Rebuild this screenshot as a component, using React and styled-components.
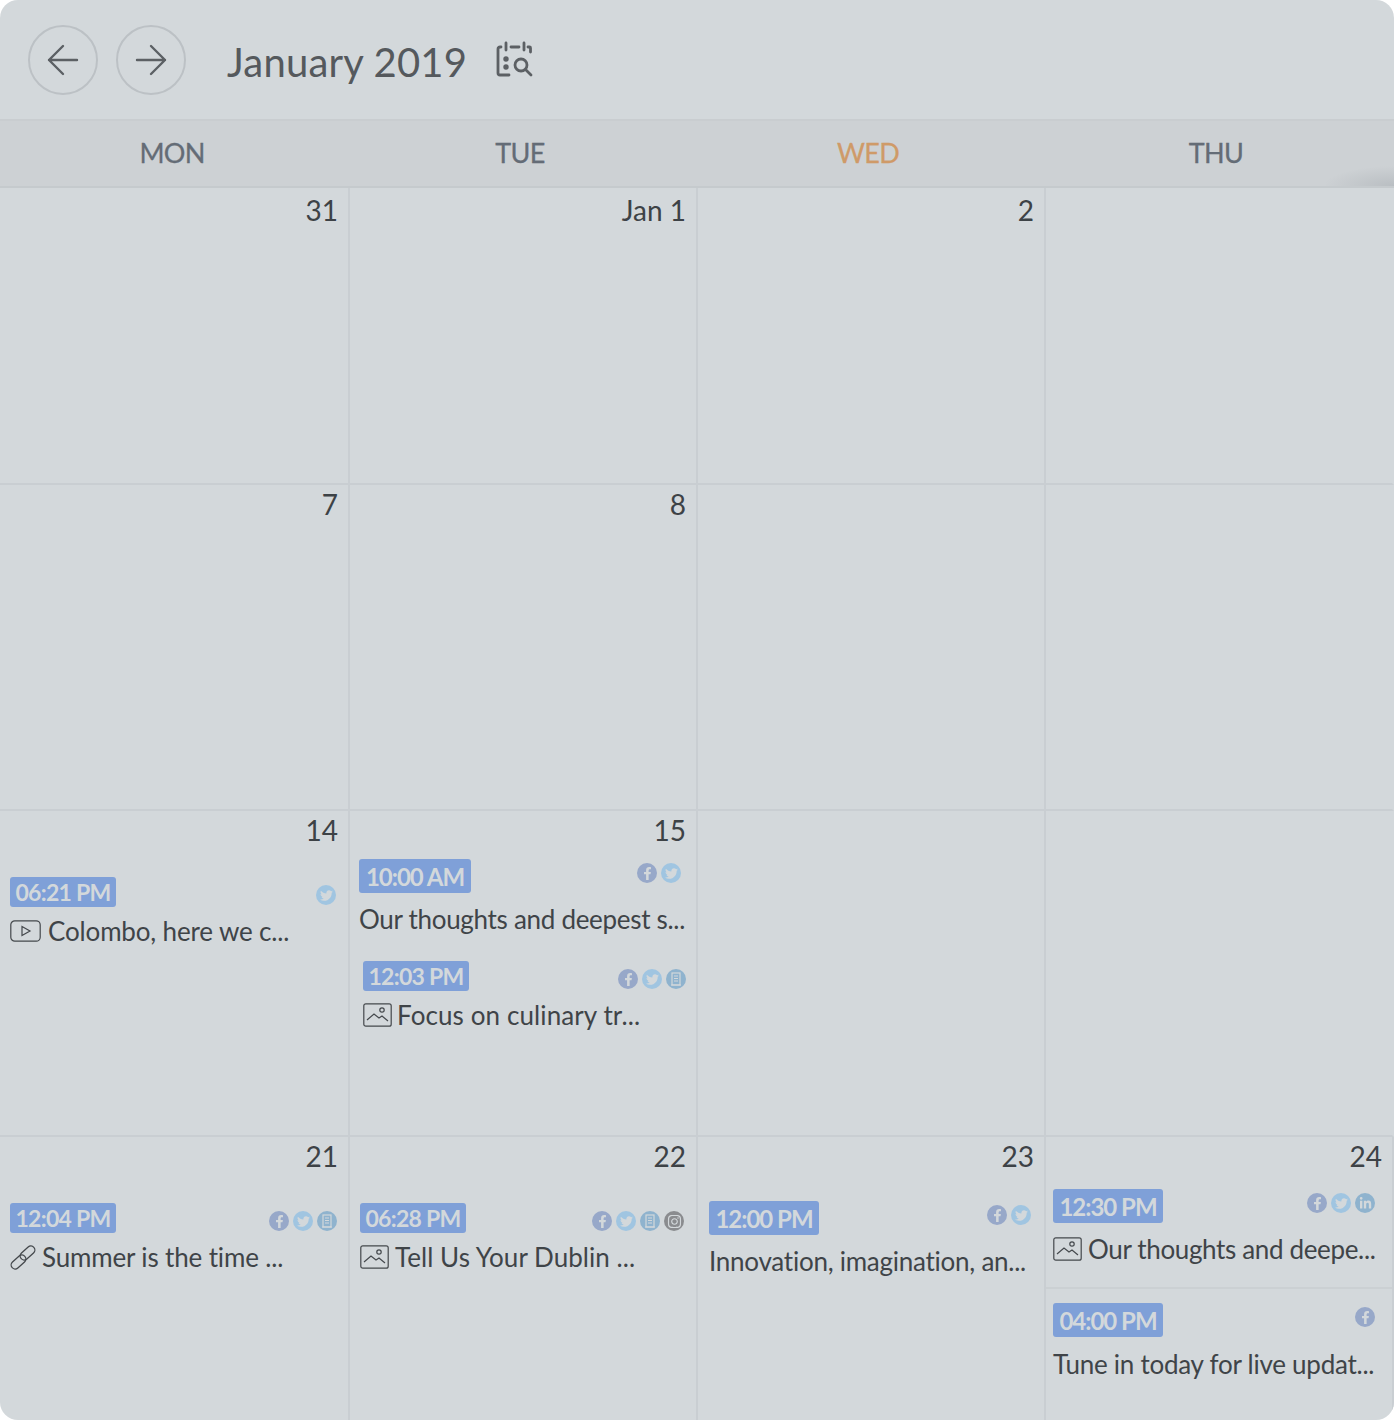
import React from 'react';
import styled, { createGlobalStyle } from 'styled-components';
import { FaFacebookF, FaTwitter, FaInstagram, FaLinkedinIn } from 'react-icons/fa';

const Global = createGlobalStyle`
  html, body { margin: 0; padding: 0; background: #fff; }
  body { font-family: Lato, "Open Sans", sans-serif; }
`;

const Card = styled.div`
  width: 1394px;
  height: 1420px;
  background: #d3d8db;
  border-radius: 18px;
  overflow: hidden;
  display: flex;
  flex-direction: column;
`;

const Header = styled.header`
  height: 121px;
  box-sizing: border-box;
  display: flex;
  align-items: center;
  padding: 0 0 0 28px;
  border-bottom: 2px solid #c9cdd0;
`;

const NavButton = styled.button`
  width: 70px;
  height: 70px;
  padding: 0;
  margin: 0 18px 0 0;
  border-radius: 50%;
  border: 2px solid #bcc1c5;
  background: transparent;
  display: flex;
  align-items: center;
  justify-content: center;
  color: #5c6064;
`;

const Title = styled.h1`
  margin: 4px 0 0 23px;
  font-size: 40px;
  font-weight: 400;
  line-height: 48px;
  letter-spacing: 0.2px;
  color: #55595d;
`;

const FindIcon = styled.svg`
  width: 38px;
  height: 38px;
  margin: 0 0 0 29px;
  color: #5c6064;
`;

const WeekBar = styled.div`
  height: 67px;
  box-sizing: border-box;
  display: grid;
  grid-template-columns: repeat(4, 348px);
  background:
    radial-gradient(ellipse 70px 20px at 1394px 100%, #b9bec2 0%, rgba(185, 190, 194, 0) 100%),
    #cdd1d4;
  border-bottom: 2px solid #c5cacd;
`;

const WeekDay = styled.div`
  display: flex;
  align-items: center;
  justify-content: center;
  padding: 0 4px 2px 0;
  font-size: 27px;
  font-weight: 400;
  -webkit-text-stroke: 0.3px currentColor;
  letter-spacing: -0.7px;
  color: ${p => (p.$today ? '#cf9a68' : '#646c76')};
`;

const Grid = styled.div`
  flex: 1;
  display: grid;
  grid-template-columns: 350px 348px 348px 348px;
  grid-template-rows: 297px 326px 326px 283px;
`;

const Cell = styled.div`
  box-sizing: border-box;
  border-right: 2px solid ${p => (p.$last ? 'transparent' : '#c9ced2')};
  border-bottom: ${p => (p.$bottom ? '0' : '2px solid #c9ced2')};
  display: flex;
  flex-direction: column;
`;

const DayNum = styled.div`
  height: 44px;
  padding: ${p => (p.$first ? 4 : 1)}px 10px 0 0;
  box-sizing: border-box;
  text-align: right;
  font-size: 28px;
  line-height: 36px;
  color: #3d4246;
`;

const Event = styled.div`
  padding: ${p => p.$top ?? 0}px ${p => p.$right ?? 10}px ${p => p.$bottom ?? 0}px ${p => p.$left ?? 10}px;
  border-bottom: ${p => (p.$divided ? '2px solid #cbd0d3' : '0')};
`;

const Meta = styled.div`
  display: flex;
  justify-content: space-between;
  align-items: flex-start;
`;

const Badge = styled.span`
  display: inline-flex;
  align-items: center;
  justify-content: center;
  box-sizing: border-box;
  height: ${p => (p.$large ? 34 : 30)}px;
  min-width: ${p => p.$min ?? (p.$large ? 110 : 106)}px;
  padding: 0 ${p => (p.$large ? 6 : 5)}px;
  border-radius: 3px;
  background: #7fa0d8;
  color: #d3d8db;
  font-size: ${p => (p.$large ? 24 : 23)}px;
  font-weight: 700;
  letter-spacing: ${p => (p.$large ? -1 : -0.7)}px;
  white-space: nowrap;
`;

const Socials = styled.div`
  display: flex;
  gap: 4px;
  margin-top: ${p => p.$top ?? 4}px;
`;

const Social = styled.span`
  width: 20px;
  height: 20px;
  border-radius: 50%;
  display: flex;
  align-items: center;
  justify-content: center;
  background: ${p => p.$bg};
  color: #d3d8db;
  font-size: 13px;
`;

const PostTitle = styled.div`
  margin-top: ${p => p.$top ?? 6}px;
  height: 36px;
  display: flex;
  align-items: center;
  gap: ${p => p.$gap ?? 7}px;
  font-size: 26px;
  letter-spacing: ${p => p.$track ?? -0.25}px;
  color: #3f4448;
  white-space: nowrap;
`;

const TypeIcon = styled.svg`
  flex: none;
  color: #44484c;
`;

const Doc = () => (
  <svg width="12" height="14" viewBox="0 0 12 14" fill="none" stroke="currentColor" strokeWidth="1.2">
    <rect x="2" y="1" width="8" height="12" />
    <path d="M4 4h4M4 6.5h4M4 9h4M1 13h10" />
  </svg>
);

const socialMap = {
  f: { bg: '#97a8c9', el: <FaFacebookF /> },
  t: { bg: '#a0c5e1', el: <FaTwitter /> },
  d: { bg: '#8fb3ce', el: <Doc /> },
  i: { bg: '#8a8c8f', el: <FaInstagram size={15} /> },
  l: { bg: '#8fb3ce', el: <FaLinkedinIn /> },
};

const SocialList = ({ items, top }) => (
  <Socials $top={top}>
    {items.split('').map((k, i) => (
      <Social key={i} $bg={socialMap[k].bg}>{socialMap[k].el}</Social>
    ))}
  </Socials>
);

const VideoIcon = () => (
  <TypeIcon width="31" height="22" viewBox="0 0 31 22" fill="none" stroke="currentColor" strokeWidth="1.2">
    <rect x="0.8" y="0.8" width="29.4" height="20.4" rx="4" />
    <path d="M12 6.5l8 4.5-8 4.5z" />
  </TypeIcon>
);

const ImageIcon = () => (
  <TypeIcon width="29" height="24" viewBox="0 0 29 24" fill="none" stroke="currentColor" strokeWidth="1.2">
    <rect x="0.8" y="0.8" width="27.4" height="22.4" rx="2" />
    <circle cx="19" cy="7" r="2.2" />
    <path d="M4 17l7-6 5 4 3-2 6 5" />
  </TypeIcon>
);

const LinkIcon = () => (
  <TypeIcon width="26" height="25" viewBox="0 0 26 25" fill="none" stroke="currentColor" strokeWidth="1.3">
    <rect x="0" y="13" width="17" height="8" rx="4" transform="rotate(-42 8.5 17)" />
    <rect x="9" y="4" width="17" height="8" rx="4" transform="rotate(-42 17.5 8)" />
  </TypeIcon>
);

const Arrow = ({ flip }) => (
  <svg width="34" height="34" viewBox="0 0 34 34" fill="none" stroke="currentColor" strokeWidth="2.4" strokeLinecap="round" strokeLinejoin="round">
    {flip ? (
      <path d="M3 17h28M17 3l14 14-14 14" />
    ) : (
      <path d="M31 17H3M17 3L3 17l14 14" />
    )}
  </svg>
);

export default function App() {
  return (
    <>
      <Global />
      <Card>
        <Header>
          <NavButton aria-label="Previous"><Arrow /></NavButton>
          <NavButton aria-label="Next"><Arrow flip /></NavButton>
          <Title>January 2019</Title>
          <FindIcon viewBox="0 0 38 38" fill="none" stroke="currentColor" strokeWidth="2.8" strokeLinecap="round" strokeLinejoin="round">
            <path d="M10 2v7M15 6h8M28 2v7M32 6h1.5a1 1 0 0 1 1 1v4M5 6H4a2 2 0 0 0-2 2v24a2 2 0 0 0 2 2h9" />
            <circle cx="10" cy="18" r="1.3" fill="currentColor" />
            <circle cx="10" cy="26" r="1.3" fill="currentColor" />
            <circle cx="25" cy="24" r="6" />
            <path d="M29.5 28.5L35 34" />
          </FindIcon>
        </Header>
        <WeekBar>
          <WeekDay>MON</WeekDay>
          <WeekDay>TUE</WeekDay>
          <WeekDay $today>WED</WeekDay>
          <WeekDay>THU</WeekDay>
        </WeekBar>
        <Grid>
          <Cell><DayNum $first>31</DayNum></Cell>
          <Cell><DayNum $first>Jan 1</DayNum></Cell>
          <Cell><DayNum $first>2</DayNum></Cell>
          <Cell $last />

          <Cell><DayNum>7</DayNum></Cell>
          <Cell><DayNum>8</DayNum></Cell>
          <Cell />
          <Cell $last />

          <Cell>
            <DayNum>14</DayNum>
            <Event $top={22} $right={12}>
              <Meta>
                <Badge>06:21 PM</Badge>
                <SocialList items="t" top={8} />
              </Meta>
              <PostTitle $top={6} $track={-0.15}><VideoIcon />Colombo, here we c...</PostTitle>
            </Event>
          </Cell>
          <Cell>
            <DayNum>15</DayNum>
            <Event $top={4} $left={9} $right={15}>
              <Meta>
                <Badge $large $min={112}>10:00 AM</Badge>
                <SocialList items="ft" />
              </Meta>
              <PostTitle $top={8} $track={-0.3}>Our thoughts and deepest s...</PostTitle>
            </Event>
            <Event $top={24} $left={13} $right={10}>
              <Meta>
                <Badge>12:03 PM</Badge>
                <SocialList items="ftd" top={8} />
              </Meta>
              <PostTitle $top={6} $gap={5} $track={0.1}><ImageIcon />Focus on culinary tr...</PostTitle>
            </Event>
          </Cell>
          <Cell />
          <Cell $last />

          <Cell $bottom>
            <DayNum>21</DayNum>
            <Event $top={22} $right={11}>
              <Meta>
                <Badge>12:04 PM</Badge>
                <SocialList items="ftd" top={8} />
              </Meta>
              <PostTitle $top={6} $gap={6} $track={-0.15}><LinkIcon />Summer is the time ...</PostTitle>
            </Event>
          </Cell>
          <Cell $bottom>
            <DayNum>22</DayNum>
            <Event $top={22} $right={12}>
              <Meta>
                <Badge>06:28 PM</Badge>
                <SocialList items="ftdi" top={8} />
              </Meta>
              <PostTitle $top={6} $gap={6} $track={0.05}><ImageIcon />Tell Us Your Dublin ...</PostTitle>
            </Event>
          </Cell>
          <Cell $bottom>
            <DayNum>23</DayNum>
            <Event $top={20} $left={11} $right={13}>
              <Meta>
                <Badge $large>12:00 PM</Badge>
                <SocialList items="ft" />
              </Meta>
              <PostTitle $top={8}>Innovation, imagination, an...</PostTitle>
            </Event>
          </Cell>
          <Cell $bottom>
            <DayNum>24</DayNum>
            <Event $top={8} $left={7} $right={17} $bottom={20} $divided>
              <Meta>
                <Badge $large>12:30 PM</Badge>
                <SocialList items="ftl" />
              </Meta>
              <PostTitle $top={8} $gap={6} $track={-0.35}><ImageIcon />Our thoughts and deepe...</PostTitle>
            </Event>
            <Event $top={14} $left={7} $right={17}>
              <Meta>
                <Badge $large>04:00 PM</Badge>
                <SocialList items="f" />
              </Meta>
              <PostTitle $top={9}>Tune in today for live updat...</PostTitle>
            </Event>
          </Cell>
        </Grid>
      </Card>
    </>
  );
}
